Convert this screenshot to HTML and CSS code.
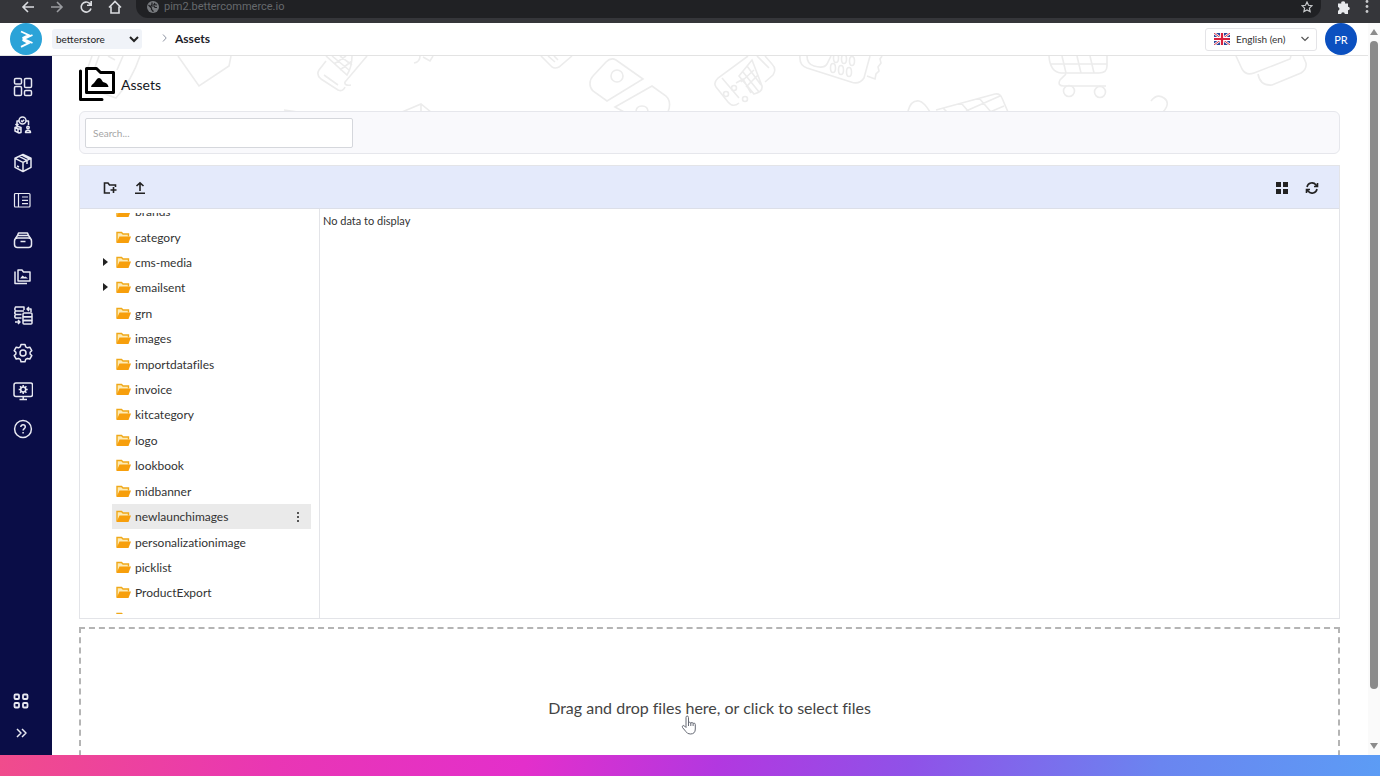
FILE: index.html
```html
<!DOCTYPE html>
<html lang="en">
<head>
  <meta charset="UTF-8" />
  <title>Assets</title>
  <link rel="stylesheet" href="styles.css">
</head>
<body>

<!-- Browser bar -->
<div class="browser-bar">
  <div class="browser-nav">
    <button aria-label="Back"><svg width="14" height="14" viewBox="0 0 14 14"><path d="M13 7H2M7 2L2 7l5 5"/></svg></button>
    <button class="dim" aria-label="Forward"><svg width="14" height="14" viewBox="0 0 14 14"><path d="M1 7h11M7 2l5 5-5 5"/></svg></button>
    <button aria-label="Reload"><svg width="14" height="14" viewBox="0 0 14 14"><path d="M12 8.500A5 5 0 1 1 10.600 3.400L12 5M12.200 1v4.200H8"/></svg></button>
    <button aria-label="Home"><svg width="14" height="14" viewBox="0 0 14 14"><path d="M1 7.500L7 1.500l6 6M3 6.500V13h8V6.500"/></svg></button>
  </div>
  <div class="address">
    <svg width="12" height="12" viewBox="0 0 12 12"><circle cx="6" cy="6" r="6" fill="#777a7e"/><path d="M1.500 4l3 3v1.500L6 10v1M5 1.500v2L4 5h3l1 1.500h2M8 2l-1 1.500 3 .5" fill="none" stroke="#202124" stroke-width="1.200"/></svg>
    <input type="text" aria-label="Address" value="pim2.bettercommerce.io" readonly>
    <svg width="12" height="12" viewBox="0 0 12 12"><path d="M6 1l1.500 3.300 3.500.4-2.600 2.400.7 3.500L6 8.900l-3.100 1.700.7-3.500L1 4.700l3.500-.4z" fill="none" stroke="#c8cacc" stroke-width="1.200"/></svg>
  </div>
  <div class="browser-tools">
    <svg width="14" height="14" viewBox="0 0 14 14"><path d="M1 3.500h3.300a1.900 1.900 0 1 1 3.700 0h3v3.200a1.800 1.800 0 1 1 0 3.600V14H7.800a1.800 1.800 0 0 0-3.600 0H1v-3.300a1.900 1.900 0 0 0 0-3.700z" fill="#e8eaed"/></svg>
    <svg width="4" height="14" viewBox="0 0 4 14"><g fill="#c8cacc"><circle cx="2" cy="1.500" r="1.400"/><circle cx="2" cy="6.500" r="1.400"/><circle cx="2" cy="11.500" r="1.400"/></g></svg>
  </div>
</div>

<div class="viewport">
  <div class="app">
    <header class="header">
      <a href="#" class="logo" aria-label="Home">
        <svg width="32" height="32" viewBox="0 0 32 32"><circle cx="16" cy="16" r="16" fill="#2ba3d8"/><path d="M11 8.500l7.500 3.500-6 3.200M22.500 12l-8.500 4 8.500 4M12.500 17l6 3.200-7.500 3.600" fill="none" stroke="#fff" stroke-width="1.900"/></svg>
      </a>
      <select class="store" aria-label="Store"><option>betterstore</option></select>
      <nav class="breadcrumb">
        <svg width="5" height="8" viewBox="0 0 5 8"><path d="M1 0.500L4.200 4 1 7.500" fill="none" stroke="#8d93a1"/></svg>
        <span>Assets</span>
      </nav>
      <button class="language">
        <svg width="16" height="12" viewBox="0 0 16 12"><rect width="16" height="12" fill="#2b479b"/><path d="M0 0l16 12M16 0L0 12" stroke="#fff" stroke-width="2.400"/><path d="M0 0l16 12M16 0L0 12" stroke="#d8334a"/><path d="M8 0v12M0 6h16" stroke="#fff" stroke-width="4"/><path d="M8 0v12M0 6h16" stroke="#d8203c" stroke-width="2.200"/></svg>
        <span>English (en)</span>
        <svg width="8" height="6" viewBox="0 0 8 6"><path d="M.5 1L4 4.500 7.500 1" fill="none" stroke="#555" stroke-width="1.200"/></svg>
      </button>
      <button class="avatar">PR</button>
    </header>

    <div class="layout">
      <nav class="sidebar">
        <a href="#" aria-label="Dashboard"><svg width="20" height="20" viewBox="0 0 20 20"><rect x="1.500" y="1.500" width="7" height="5.500" rx="1.300"/><rect x="1.500" y="9.500" width="7" height="9" rx="1.300"/><rect x="11.500" y="1.500" width="7" height="9" rx="1.300"/><rect x="11.500" y="13.500" width="7" height="5" rx="1.300"/></svg></a>
        <a href="#" aria-label="Commerce"><svg width="20" height="20" viewBox="0 0 20 20"><circle cx="9.500" cy="5.500" r="3.500"/><path d="M8 5.500l1.200 1.200 2-2M6 6H4v4M13 6h2.500v4M2.500 9L4 10.500 5.500 9M2 12.500l3-1 3 1v5l-2 .5-4-2zM2 12.500l3 1.500h3M5 14v3.500"/><circle cx="15" cy="12.500" r="1.200"/><path d="M12.500 17.500c0-3 5-3 5 0z"/></svg></a>
        <a href="#" aria-label="Catalog"><svg width="20" height="20" viewBox="0 0 20 20"><path d="M10 1.500l8 3.800v9L10 18.500l-8-4.200v-9zM2 5.300l8 4 8-4M10 9.300v9.200M6 3.400l8 4v3.500M9 2.200l7 3.600M4 13l2 1"/></svg></a>
        <a href="#" aria-label="Content"><svg width="20" height="20" viewBox="0 0 20 20"><g stroke-width="1.200"><rect x="1.500" y="2.500" width="15.500" height="13.500" rx="1"/><path d="M5.500 2.500V16M9 6h6M9 9.300h6M9 12.600h6"/></g></svg></a>
        <a href="#" aria-label="Orders"><svg width="20" height="20" viewBox="0 0 20 20"><rect x="1.500" y="9" width="17" height="9.500" rx="3"/><path d="M2.500 9.500l2-3h11l2 3M4.500 6.500l1-2.500h9l1 2.500M7.500 12.500h5"/></svg></a>
        <a href="#" aria-label="Assets"><svg width="20" height="20" viewBox="0 0 20 20"><path d="M5 3h4l1.500 2H17v9H5zM2 4.500v12h12"/><path d="M7 11.500l2.500-3 2 1.500 1-.5 2.500 2z" fill="#e8e9f2" stroke="none"/></svg></a>
        <a href="#" aria-label="Data sync"><svg width="20" height="20" viewBox="0 0 20 20"><path d="M8.500 9.500H2.500q-1.500-1.700 0-3.500H11M2.500 6q-1.500-2 0-4H11v3M8.500 13H2.500q-1.500-1.700 0-3.500M14 4h4v3M16 2l-2 2 2 2M7 17H2M5 15l2 2-2 2"/><rect x="10" y="8" width="9" height="3.800" rx="1"/><rect x="10" y="11.800" width="9" height="3.600"/><rect x="10" y="15.400" width="9" height="3.600" rx="1"/></svg></a>
        <a href="#" aria-label="Settings"><svg width="20" height="20" viewBox="0 0 20 20"><path d="M8 1.500h4l.7 2.300 1.800 1 2.300-.6 2 3.400-1.700 1.600v1.800l1.700 1.600-2 3.400-2.300-.6-1.800 1-.7 2.300H8l-.7-2.300-1.800-1-2.300.6-2-3.400 1.700-1.600V9.200L1.200 7.600l2-3.400 2.300.6 1.800-1z"/><circle cx="10" cy="10" r="3"/></svg></a>
        <a href="#" aria-label="System"><svg width="20" height="20" viewBox="0 0 20 20"><rect x="1" y="2" width="18.500" height="13.500" rx="2"/><path d="M10.200 15.500v3M6.500 18.500h7.500M10.200 4v2M10.200 11v2M5.700 8.500h2M12.700 8.500h2M7 5.300l1.400 1.400M12 10.300l1.400 1.400M13.400 5.300L12 6.700M8.400 10.300L7 11.700"/><circle cx="10.200" cy="8.500" r="2.500"/></svg></a>
        <a href="#" aria-label="Help"><svg width="20" height="20" viewBox="0 0 20 20"><circle cx="10" cy="10" r="8.400"/><path d="M7.800 8c0-3 4.500-2.700 4.500 0 0 1.600-2.200 1.600-2.200 3.400M10.100 13v1.500"/></svg></a>
        <div class="sidebar-bottom">
          <a href="#" aria-label="Apps"><svg width="16" height="16" viewBox="0 0 16 16"><g stroke-width="1.800"><rect x="1.500" y="1.500" width="4.500" height="4.500" rx="1"/><rect x="10" y="1.500" width="4.500" height="4.500" rx="1"/><rect x="1.500" y="10" width="4.500" height="4.500" rx="1"/><rect x="10" y="10" width="4.500" height="4.500" rx="1"/></g></svg></a>
          <a href="#" aria-label="Expand"><svg width="16" height="16" viewBox="0 0 16 16"><path d="M4 4l4 4-4 4M9 4l4 4-4 4"/></svg></a>
        </div>
      </nav>

      <main class="main">
        <div class="title-row">
          <!-- Background pattern -->
          <svg class="pattern" width="1316" height="56" viewBox="52 56 1316 56">
            <path d="M92 56l-5 14M99 56l-5 14M108 56l7 4M140 56q-8 24-24 42l-14-5M123 56l-6 14"/>
            <path d="M178 56l21 30 30-20 2-10"/>
            <path d="M326 61l-7 9q-3 5 2 9l17 11q5 2 7-3M324 75l14 10M326 56l21 19q5-8 5-19M332 56l17 14M340 56l12 9M334 64l12-8M340 70l12-9M367 56l-22 26q-1 4 6 3"/>
            <path d="M414 63q6-1 6-7M423 57l7 4 3-5M541 56l11 11q3 2 7 0l13-11M548 56l7 6M554 56l4 4"/>
            <path d="M590 84q0-5 3-8l13-14q5-5 10-2l27 19-36 22-14-10q-3-3-3-7z"/><circle cx="617" cy="76" r="6"/>
            <path d="M624 112l-9-5 37-21 14 10q6 6 2 16"/><path d="M636 112q0-6 6-6t6 6"/>
            <path d="M748 56l-30 22q-5 5-2 9l12 15q5 6 11 1M722 78l17 20M765 82l8-7q4-6-1-11l-7-8M757 56l12 12M739 76l15 18q9-2 8-8l-10-26zM743 72l16 20M747 66l14 19M741 82l13-12M746 87l12-12M736 83l7-4 8 14"/><circle cx="726" cy="94" r="2.500"/><circle cx="734" cy="88" r="2.500"/><circle cx="745" cy="99" r="2.500"/>
            <path d="M800 56q-1 9 7 12l44 14q8 3 13-4l6-22M807 56q0 8 7 10 10 3 13-2l4-8M867 76l8 3 1-5 3-3-1-4 3-4-1-4 2-3"/>
            <ellipse cx="836" cy="58" rx="2.500" ry="4.500"/><ellipse cx="844" cy="59" rx="2.500" ry="4.500"/><ellipse cx="852" cy="61" rx="2.500" ry="4.500"/><ellipse cx="833" cy="68" rx="2.500" ry="4.500"/><ellipse cx="841" cy="70" rx="2.500" ry="4.500"/><ellipse cx="849" cy="72" rx="2.500" ry="4.500"/>
            <path d="M908 111q3-11 11-10 5 1 11 11M936 110l59-16q5-1 7 4l6 14M943 108l4 4M961 103l8 9M979 98l12 14M966 111l34-15M990 112l14-6"/>
            <path d="M1049 56q1 16 12 17h38q8 0 8-7V56M1050 64h57M1062 56l4 17M1077 56l4 17M1090 56l4 17M1066 74l-6 6q-3 6 4 6h42"/><circle cx="1069" cy="91" r="5.500"/><circle cx="1100" cy="92" r="5.500"/>
            <path d="M1151 101q6-8 13-3t-1 14M284 110l14 2M402 112l19-8 10 8M421 104v8"/>
            <path d="M1236 56l6 13q4 7 12 4l36-14 1-3M1258 74q2 12 14 11l29-12q6-4 5-10l-3-7"/>
          </svg>
          <svg width="36" height="34" viewBox="0 0 36 34"><path d="M1.500 4v28.500h21.500M7.500 1.500h10l4 4H34.500v20H7.500z" fill="none" stroke="#000" stroke-width="3" stroke-linejoin="round" stroke-linecap="round"/><path d="M12 20q0-2 3-4l3-4q2-2 4 0l2 3q5 1 5.500 5z"/></svg>
          <h1>Assets</h1>
        </div>

        <div class="search-bar">
          <input type="text" aria-label="Search" placeholder="Search...">
        </div>

        <section class="panel">
          <div class="toolbar">
            <button aria-label="New folder"><svg width="14" height="14" viewBox="0 0 14 14"><path d="M7 12H1.500V2H5l1.500 2h6v2M10.500 6v6M7.500 9h6"/></svg></button>
            <button aria-label="Upload"><svg width="14" height="14" viewBox="0 0 14 14"><path d="M7 10V2M3.500 5L7 1.800 10.500 5M2 12.200h10"/></svg></button>
            <button class="push" aria-label="Grid view"><svg width="14" height="14" viewBox="0 0 14 14"><path d="M1 1h5v5H1zM8 1h5v5H8zM1 8h5v5H1zM8 8h5v5H8z" fill="#222" stroke="none"/></svg></button>
            <button aria-label="Refresh"><svg width="14" height="14" viewBox="0 0 14 14"><path d="M2 6a5 5 0 0 1 9-2l1.500 1.500M12.500 2v3.500H9M12 8a5 5 0 0 1-9 2L1.500 8.500M1.500 12V8.500H5"/></svg></button>
          </div>
          <div class="panel-body">
            <div class="tree-wrap">
              <ul class="tree" id="tree"></ul>
            </div>
            <div class="files">No data to display</div>
          </div>
        </section>

        <button class="dropzone">
          <span>Drag and drop files here, or click to select files</span>
        </button>
      </main>
    </div>
  </div>

  <div class="scrollbar">
    <span class="arrow-up"></span>
    <span class="thumb"></span>
    <span class="arrow-down"></span>
  </div>

  <!-- Mouse pointer -->
  <svg class="pointer" width="16" height="20" viewBox="0 0 16 20"><path d="M5 11V2.500q0-1.500 1.200-1.500t1.300 1.500V8q1-1.500 2.300 0 1.300-1.200 2.300.3 2-.8 2.200 1.200V14q0 5-5 5-3 0-4.300-2.300L1.500 12.500q-.8-1.500.7-2 1.300 0 2.800 2zM7.500 8v3M9.800 8v3M12.100 8.500V11" fill="#fff" stroke="#666a75"/></svg>
</div>

<div class="footer-strip"></div>

<script>
  const folders = [
    { name: 'brands' },
    { name: 'category' },
    { name: 'cms-media', children: true },
    { name: 'emailsent', children: true },
    { name: 'grn' },
    { name: 'images' },
    { name: 'importdatafiles' },
    { name: 'invoice' },
    { name: 'kitcategory' },
    { name: 'logo' },
    { name: 'lookbook' },
    { name: 'midbanner' },
    { name: 'newlaunchimages', active: true },
    { name: 'personalizationimage' },
    { name: 'picklist' },
    { name: 'ProductExport' },
    { name: 'products', children: true }
  ];

  const folderIcon = '<svg width="15" height="13" viewBox="0 0 15 13"><path d="M1 11.500V1.500h4.500L7 3h5.500v2.500" fill="#fdebb5" stroke="#f0a818" stroke-width="1.400"/><path d="M3.500 5.500H15L12.500 12H.5z" fill="#f79f0c"/></svg>';

  document.getElementById('tree').innerHTML = folders.map(f => `
    <li>
      ${f.children ? '<button class="toggle" aria-label="Expand ' + f.name + '"></button>' : ''}
      <div class="row${f.active ? ' active' : ''}">
        ${folderIcon}
        <a href="#">${f.name}</a>
        ${f.active ? '<button class="more" aria-label="More"><svg width="4" height="12" viewBox="0 0 4 12"><path d="M1 1h2v2H1zM1 5h2v2H1zM1 9h2v2H1z" fill="#555"/></svg></button>' : ''}
      </div>
    </li>`).join('');
</script>

</body>
</html>
```
FILE: styles.css
```css
* { box-sizing: border-box; }
body {
  margin: 0;
  height: 100vh;
  display: flex;
  flex-direction: column;
  overflow: hidden;
  font-family: Lato, "Open Sans", sans-serif;
  font-size: 12px;
  font-variant-ligatures: none;
  color: #333;
  background: #fff;
}
button { border: none; background: none; padding: 0; font: inherit; color: inherit; cursor: pointer; }
a { color: inherit; text-decoration: none; }
svg { display: block; flex: none; }

/* Browser bar */
.browser-bar {
  flex: none;
  height: 23px;
  display: flex;
  align-items: flex-start;
  background: #35363a;
  padding: 0 11px 0 21px;
}
.browser-nav { display: flex; gap: 15px; }
.browser-nav svg { fill: none; stroke: #dadce0; stroke-width: 1.6; }
.browser-nav .dim svg { stroke: #9a9ca0; }
.address {
  flex: 1;
  height: 18px;
  display: flex;
  align-items: center;
  gap: 5px;
  margin-left: 14px;
  padding: 0 8px 5px 11px;
  border-radius: 0 0 12px 12px;
  background: #202124;
}
.address input {
  flex: 1;
  border: none;
  padding: 0;
  background: none;
  color: #66696d;
  font: 11px Roboto, sans-serif;
}
.browser-tools { display: flex; gap: 14px; margin-left: 16px; }

.viewport { flex: 1; min-height: 0; display: flex; position: relative; }
.app { flex: 1; min-width: 0; display: flex; flex-direction: column; }

/* Header */
.header {
  flex: none;
  height: 33px;
  display: flex;
  align-items: center;
  padding: 0 11px 0 10px;
  border-bottom: 1px solid #e3e3e3;
}
.store {
  width: 90px;
  height: 20px;
  margin-left: 10px;
  border: none;
  border-radius: 3px;
  background: #f0f3f8;
  font: 10px Lato, sans-serif;
  color: #222;
}
.breadcrumb {
  display: flex;
  align-items: center;
  gap: 8px;
  margin-left: 20px;
  padding-bottom: 2px;
  font-weight: 700;
  color: #1d2129;
}
.language {
  display: flex;
  align-items: center;
  width: 112px;
  height: 23px;
  margin-left: auto;
  padding: 0 7px 0 8px;
  border: 1px solid #e4e4e7;
  border-radius: 3px;
  font-size: 10px;
  gap: 6px;
}
.language svg:last-child { margin-left: auto; }
.avatar {
  width: 32px;
  height: 32px;
  margin-left: 8px;
  border-radius: 50%;
  background: #0b50c0;
  color: #fff;
  font-size: 11px;
}

/* Sidebar */
.layout { flex: 1; min-height: 0; display: flex; }
.sidebar {
  flex: none;
  width: 52px;
  display: flex;
  flex-direction: column;
  padding: 12px 6px 6px 0;
  background: #0a0d47;
}
.sidebar a { height: 38px; display: flex; align-items: center; justify-content: center; }
.sidebar svg { fill: none; stroke: #e8e9f2; stroke-width: 1.5; stroke-linejoin: round; }
.sidebar-bottom { margin-top: auto; padding-right: 4px; }
.sidebar .sidebar-bottom a { height: 32px; }

/* Main */
.main {
  flex: 1;
  min-width: 0;
  display: flex;
  flex-direction: column;
  padding: 0 28px 0 27px;
  overflow: hidden;
  position: relative;
}
.title-row { flex: none; height: 55px; display: flex; align-items: center; gap: 6px; }
.title-row h1 { margin: 0; padding-top: 2px; font-size: 14px; font-weight: 400; color: #14171c; z-index: 1; }
.title-row svg { z-index: 1; }
.title-row .pattern { position: absolute; top: 0; left: 0; z-index: 0; fill: none; stroke: #ececec; stroke-width: 1.6; }
.search-bar {
  flex: none;
  padding: 6px 5px 5px;
  border: 1px solid #e6e7ec;
  border-radius: 6px;
  background: #f9f9fc;
  position: relative;
}
.search-bar input {
  display: block;
  width: 268px;
  height: 30px;
  padding: 0 7px;
  border: 1px solid #d5d7dc;
  border-radius: 2px;
  background: #fff;
  font: 10px Lato, sans-serif;
}
.search-bar input::placeholder { color: #a5a5a5; }

.panel { flex: none; margin-top: 11px; border: 1px solid #e3e4e8; background: #fff; }
.toolbar {
  height: 43px;
  display: flex;
  align-items: center;
  gap: 16px;
  padding: 2px 20px 0 23px;
  background: #e4eafb;
  border-bottom: 1px solid #dcdfe8;
}
.toolbar svg { fill: none; stroke: #222; stroke-width: 1.6; }
.toolbar .push { margin-left: auto; }
.panel-body { display: flex; }
.tree-wrap {
  flex: none;
  width: 240px;
  height: 409px;
  padding: 4px 8px;
  border-right: 1px solid #e3e4e8;
  overflow: clip;
  overflow-clip-margin: content-box;
}
.tree {
  display: grid;
  grid-auto-rows: 1fr;
  height: 432px;
  margin: -14px 0 0;
  padding: 0 0 0 24px;
  list-style: none;
}
.tree li { display: flex; position: relative; }
.row { flex: 1; display: flex; align-items: center; gap: 4px; padding: 0 11px 0 4px; }
.row.active { background: #eaeaea; }
.toggle {
  position: absolute;
  left: -9px;
  top: 8px;
  border-left: 5px solid #222;
  border-top: 4px solid transparent;
  border-bottom: 4px solid transparent;
}
.more { margin-left: auto; }
.files { flex: 1; padding: 5px 3px; font-size: 11px; }

.dropzone {
  flex: none;
  height: 160px;
  margin-top: 8px;
  border: 2px dashed #b4b4b4;
  font-size: 16px;
  color: #444;
}

/* Scrollbar */
.scrollbar {
  flex: none;
  width: 12px;
  display: flex;
  flex-direction: column;
  align-items: center;
  padding: 6px 0;
  background: #fafafa;
}
.thumb { width: 8px; height: 90%; margin-top: 6px; border-radius: 4px; background: #8b8b8b; }
.arrow-up { border: 4px solid transparent; border-top: none; border-bottom: 6px solid #8b8b8b; }
.arrow-down { margin-top: auto; border: 4px solid transparent; border-bottom: none; border-top: 6px solid #8b8b8b; }

.pointer { position: absolute; left: 681px; top: 692px; }

.footer-strip {
  flex: none;
  height: 21px;
  background: linear-gradient(100deg, #f04c8c, #e936b4 20%, #e32fcb 38%, #b238e0 52%, #8f52e8 66%, #6a85f0 84%, #5c9cf5);
}
```
